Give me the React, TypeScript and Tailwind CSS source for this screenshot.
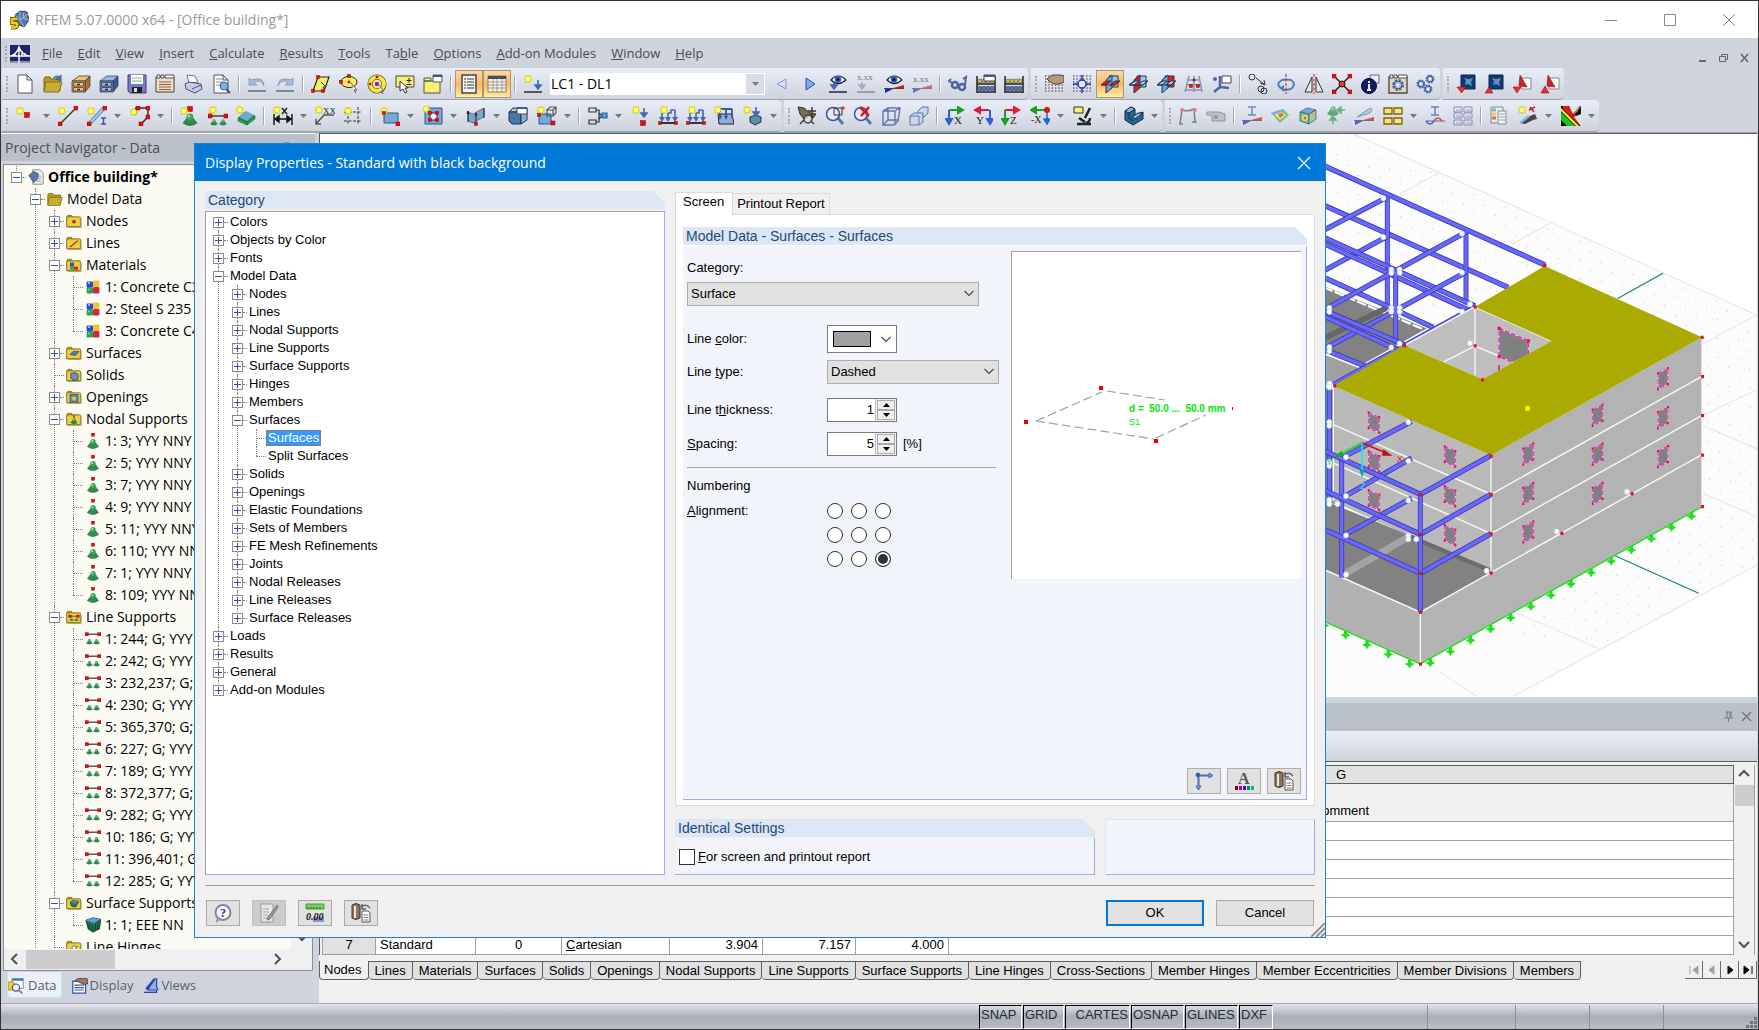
import React, { useState } from "react";
import type { ReactNode } from "react";
import clsx from "clsx";

// ---------- Icon primitives (20x20 grid) ----------

const Star = ({ x = 1, y = 1 }: { x?: number; y?: number }) => (
  <g transform={`translate(${x} ${y})`}>
    <path d="M4 0v8M0 4h8M1 1l6 6M7 1L1 7" stroke="#8a8420" strokeWidth="2" opacity=".5" />
    <path d="M4 0v8M0 4h8M1 1l6 6M7 1L1 7" stroke="#f4ee20" strokeWidth="1.300" />
    <circle cx="4" cy="4" r="2.200" fill="#ffff70" />
  </g>
);

const Dot = ({ x, y, s = 4 }: { x: number; y: number; s?: number }) => (
  <rect x={x - s / 2} y={y - s / 2} width={s} height={s} fill="#e01010" stroke="#a00000" strokeWidth=".5" />
);

const Cone = ({ x, y, s = 1 }: { x: number; y: number; s?: number }) => (
  <g transform={`translate(${x} ${y}) scale(${s})`}>
    <path d="M-3 1L-7 6Q0 11 7 6L3 1z" fill="#2f8a4c" stroke="#1c5c30" strokeWidth=".6" />
    <circle cy="0" r="3.400" fill="#3aa85c" />
    <circle cx="-1" cy="-1" r="1.200" fill="#a8e8b8" />
  </g>
);

const Down = ({ x, y, h = 8, c = "#4468b8" }: { x: number; y: number; h?: number; c?: string }) => (
  <path d={`M${x} ${y}v${h}M${x - 3} ${y + h - 3}l3 4l3-4z`} stroke={c} fill={c} strokeWidth="1.6" />
);

const Grid = () => (
  <path d="M1 2h18M1 5h18M1 8h18M1 11h18M1 14h18M1 17h18" stroke="#666" strokeWidth="1.4" strokeDasharray="1.4 1.9" />
);

const Cabinet = ({ a, b, c }: { a: string; b: string; c: string }) => (
  <g stroke="#333" strokeWidth=".7">
    <path d="M1 7l7-5h11l-5 5z" fill={b} />
    <path d="M14 7l5-5v10l-5 6z" fill={c} />
    <path d="M1 7h13v11H1z" fill={a} />
    <path d="M2.500 8.500h10v3.500h-10zM2.500 13.500h10v3.500h-10z" fill={b} />
    <path d="M6 10.500h3M6 15.500h3" strokeWidth="1.4" />
  </g>
);

const Cube = ({ a = "#8fa8d0", b = "#c8d8f0", c = "#4a6490" }: { a?: string; b?: string; c?: string }) => (
  <g stroke="#2c4468" strokeWidth=".8">
    <path d="M2 6l9 2v10l-9-3z" fill={a} />
    <path d="M2 6l7-4l9 2l-7 4z" fill={b} />
    <path d="M11 8l7-4v9l-7 5z" fill={c} />
  </g>
);

const Axis = ({ a, b, label }: { a: string; b: string; label: string }) => (
  <g>
    <path d={label === "Y" ? "M16 4H4M7 1L2 4l5 3z" : "M4 4h12M13 1l5 3l-5 3z"} stroke={a} fill={a} strokeWidth="2" />
    <path d={label === "Y" ? "M17 4v12M14 13l3 5l3-5z" : "M4 4v12M1 13l3 5l3-5z"} stroke={b} fill={b} strokeWidth="2" />
    <text x={label === "Y" ? 3 : 9} y="18" fontSize="11" fontFamily="Liberation Serif, serif" fill="#222">
      {label}
    </text>
  </g>
);

const Cross = ({ red }: { red: string }) => (
  <g stroke="#1c3850" strokeWidth="1">
    <path d="M9 2h9v11H9z" fill={red === "s" ? "#f01818" : "#98c8ec"} />
    <path d="M6 6l6-5v13l-6 5z" fill={red === "v" ? "#e02020" : "#6aa6d8"} />
    <path d="M1 11l5-4h5l-5 4zM10 11l5-4h5l-5 4z" fill={red === "h" ? "#e02020" : "#a8d0f0"} />
    <path d="M2 10l5-3M1 11h14l4-4" stroke={red === "h" ? "#a01010" : "#1c3850"} fill="none" />
  </g>
);

const Slope = () => (
  <g>
    <path d="M1 19v-4l10-1z" fill="#2020d0" />
    <path d="M20 11v4l-11-1z" fill="#e81010" />
    <path d="M0 14.500h20" stroke="#444" />
  </g>
);

const Abacus = () => (
  <g>
    <path d="M1 2v17M19 2v17M1 10h18M1 18h18" stroke="#222" strokeWidth="1.500" />
    {[4, 8, 12, 16].map((x) => (
      <g key={x}>
        <circle cx={x} cy="7" r="2" fill="#d8c050" stroke="#333" strokeWidth=".5" />
        <circle cx={x} cy="14.500" r="2.200" fill="#5878c8" stroke="#222" strokeWidth=".5" />
      </g>
    ))}
  </g>
);

const Gear = ({ x, y, r }: { x: number; y: number; r: number }) => (
  <g>
    <circle cx={x} cy={y} r={r} fill="none" stroke="#5070b0" strokeWidth={r} strokeDasharray={`${r * 0.5} ${r * 0.28}`} />
    <circle cx={x} cy={y} r={r} fill="#a8bce0" stroke="#35508c" />
    <circle cx={x} cy={y} r={r * 0.35} fill="#fff" />
  </g>
);

const Lens = () => (
  <g>
    <path d="M12 11l6 7" stroke="#5878b0" strokeWidth="3" />
    <circle cx="8" cy="8" r="6.500" fill="#e4ecf8" fillOpacity=".8" stroke="#3858a0" strokeWidth="1.500" />
  </g>
);

const Eye = ({ y = 7 }: { y?: number }) => (
  <g>
    <path d={`M3 ${y}Q10 ${y - 8} 18 ${y}Q10 ${y + 7} 3 ${y}z`} fill="#f4f8ff" stroke="#223" strokeWidth="1.200" />
    <circle cx="10" cy={y - 0.5} r="3.200" fill="#2860c0" />
    <circle cx="10" cy={y - 0.5} r="1.300" fill="#001" />
  </g>
);

const LoadArrows = () => (
  <g>
    <path d="M2 17h16" stroke="#334" strokeWidth="2" />
    <path d="M4 7v7M10 7v7M17 4v10M10 7h3V4h4" stroke="#4468b8" strokeWidth="1.600" fill="none" />
    <path d="M1 11l3 5l3-5zM7 11l3 5l3-5zM14 11l3 5l3-5z" fill="#4468b8" />
    <Star x={2} y={0} />
    <Dot x={2} y={17} s={3} />
    <Dot x={18} y={17} s={3} />
  </g>
);

const Doc = () => (
  <path d="M3 1h9l5 5v13H3zM12 1v5h5" fill="#fff" stroke="#555" />
);

const Pdf = ({ up }: { up?: boolean }) => (
  <g>
    <path d="M9 4h10v11H9z" fill="#fafafa" stroke="#888" />
    <path d="M8 1l7 12l-8-1z" fill="#d02028" stroke="#801018" strokeWidth=".6" />
    {up ? <path d="M1 19l4-7l4 7z" fill="#e83030" stroke="#901010" strokeWidth=".6" /> : <path d="M1 13h8l-4 6z" fill="#e83030" stroke="#901010" strokeWidth=".6" />}
  </g>
);

const Cad = ({ up }: { up?: boolean }) => (
  <g>
    <path d="M5 1h14v14H5z" fill="#0c3c70" stroke="#082848" />
    <path d="M8 4l4 1l5-1l-2 4l1 4l-4-2l-3 1l1-4z" fill="#70a8e0" opacity=".8" />
    {up ? <path d="M1 19l4-6l4 6z" fill="#e83030" stroke="#901010" strokeWidth=".6" /> : <path d="M1 13h9l-4.500 6z" fill="#e83030" stroke="#901010" strokeWidth=".6" />}
  </g>
);

const Folder = ({ open }: { open?: boolean }) => (
  <g>
    <path d="M1 5l1-2h5l1 2h9v12H1z" fill="#b89c20" stroke="#7a6410" />
    <path d={open ? "M3 8h16l-3 10H1z" : "M1 5h17v12H1z"} fill={open ? "#c8ae30" : "#ecd048"} stroke="#8a7418" />
    {!open && <path d="M2 18h17V7" stroke="#9a8a48" />}
  </g>
);

const icons: Record<string, ReactNode> = {
  new: <Doc />,
  open: (
    <g>
      <Folder open />
      <path d="M10 4q5-5 8 2M18 1v6l-5-2z" stroke="#3868a8" fill="#3868a8" fillOpacity=".7" />
    </g>
  ),
  block: <Cabinet a="#d8a058" b="#f0c080" c="#a87030" />,
  blockBlue: <Cabinet a="#6888d0" b="#98b4f0" c="#3858a0" />,
  save: (
    <g>
      <path d="M1 1h18v18H3l-2-2z" fill="#7878c8" stroke="#40407c" />
      <path d="M4 1h12v9H4z" fill="#fff" />
      <path d="M5 4h10M5 7h10" stroke="#78b878" />
      <path d="M5 13h10v6H5z" fill="#222" />
      <path d="M7 14h3v4H7z" fill="#ddd" />
    </g>
  ),
  report: (
    <g>
      <path d="M1 3h18v15H1z" fill="#f0dcc0" stroke="#444" />
      <path d="M2 1h3v3H2zM6 1h3v3H6zM10 1h9v3h-9z" fill="#fff" stroke="#555" />
      <path d="M4 8h12M4 10.500h12M4 13h12M4 15.500h12" stroke="#806850" />
    </g>
  ),
  print: (
    <g>
      <path d="M4 1l8 1l3 6l-9 1z" fill="#fff" stroke="#777" />
      <path d="M2 10l4-2l12 2l1 5l-7 4l-9-4z" fill="#c8c8e8" stroke="#50507c" />
      <path d="M9 15l9-4" stroke="#50507c" />
    </g>
  ),
  preview: (
    <g>
      <Doc />
      <path d="M5 5h6M5 8h7M5 11h5" stroke="#888" />
      <path d="M15 15l4 4" stroke="#446" strokeWidth="2" />
      <circle cx="13" cy="12" r="4" fill="#80b0e8" stroke="#3868a0" />
    </g>
  ),
  undo: <g><path d="M2 4v7h8L7 8q7-3 10 4q0-10-13-6z" fill="#a8bcd8" stroke="#7890b0" strokeWidth=".7" /><path d="M1 17h18" stroke="#808890" strokeWidth="2" /></g>,
  redo: <g><path d="M18 4v7h-8l3-3q-7-3-10 4q0-10 13-6z" fill="#a8bcd8" stroke="#7890b0" strokeWidth=".7" /><path d="M1 17h18" stroke="#808890" strokeWidth="2" /></g>,
  selPoly: <g><path d="M7 3h11l-5 14H2z" fill="#f8f060" stroke="#222" strokeWidth="1.200" /><Dot x={7} y={3} s={3} /><Dot x={2} y={17} s={3} /><Dot x={12} y={17} s={3} /><path d="M10 8l5 5h-3l2 4" fill="#fff" stroke="#333" /></g>,
  selEllipse: <g><ellipse cx="10" cy="8" rx="8" ry="5.500" fill="#f8f060" stroke="#222" /><Dot x={10} y={2} s={3} /><Dot x={2} y={8} s={3} /><Dot x={10} y={8} s={2} /><path d="M12 9l6 7h-3l2 3" fill="#fff" stroke="#555" /></g>,
  selRing: <g><circle cx="10" cy="10" r="7" fill="none" stroke="#333" strokeWidth="5" /><circle cx="10" cy="10" r="7" fill="none" stroke="#f8e830" strokeWidth="4" /><Dot x={10} y={10} s={3} /><Dot x={10} y={3} s={2} /><Dot x={3} y={10} s={2} /><path d="M11 10l6 7h-3l2 3" fill="#fff" stroke="#555" /></g>,
  selSign: <g><path d="M1 2h18v11H1z" fill="#f8f070" stroke="#444" /><path d="M14 4v5M11.500 6.500h5M11.500 10.500h5" stroke="#222" /><path d="M5 7v10l3-2l2 4l2-1l-2-4h3z" fill="#fff" stroke="#333" /></g>,
  selBox: <g><path d="M1 7h16v12H1zM1 4h7v3H1z" fill="#f8f070" stroke="#555" /><path d="M10 1h9v7h-9z" fill="#fff" stroke="#555" /><path d="M10 2h9" stroke="#33589a" strokeWidth="2" /></g>,
  navToggle: <g><path d="M3 1h14v18H3z" fill="#f4f4f4" stroke="#444" strokeWidth="1.500" /><path d="M5 5h2M5 8h2M5 11h2M5 14h2M8 5h7M8 8h7M8 11h7M8 14h7" stroke="#333" strokeWidth="1.200" /></g>,
  tblToggle: <g><path d="M1 2h18v16H1z" fill="#f4f4ee" stroke="#8a7a60" /><path d="M1 2h18v3H1z" fill="#445068" /><path d="M1 8h18M1 11h18M1 14h18M6 5v13M10 5v13M15 5v13" stroke="#a89c88" /></g>,
  loadCase: <g><path d="M1 18h18" stroke="#555" strokeWidth="2" /><Down x={15} y={6} /><Star x={1} y={1} /></g>,
  prev: <path d="M14 5v10L5 10z" fill="#d4e0f4" stroke="#8098c8" />,
  next: <path d="M6 4v12l9-6z" fill="#80a8f0" stroke="#2850b0" />,
  eyeLoad: <g><path d="M1 18h18" stroke="#555" strokeWidth="2" /><Eye y={6} /><Down x={6} y={9} h={5} /></g>,
  xxLoad: <g opacity=".7"><path d="M1 18h18" stroke="#888" strokeWidth="2" /><Down x={6} y={8} h={6} c="#8898c0" /><text x="1" y="6" fontSize="9" fontFamily="Liberation Serif, serif" fill="#444">x.xx</text></g>,
  eyeRes: <g><Slope /><Eye y={6} /></g>,
  xxRes: <g opacity=".6"><Slope /><text x="1" y="8" fontSize="9" fontFamily="Liberation Serif, serif" fill="#222">x.xx</text></g>,
  glasses: <g fill="none" stroke="#48689c" strokeWidth="2.500"><circle cx="7" cy="11" r="3" /><circle cx="14" cy="13" r="3" /><path d="M4 9L1 7l2-2M17 11l1-8l-3 2" strokeWidth="2" /></g>,
  calcDlg: <g><Abacus /><path d="M8 1h11v6H8z" fill="#fff" stroke="#445" /><path d="M8 2h11" stroke="#3858a0" strokeWidth="2" /></g>,
  calc: <Abacus />,
  gridHand: <g><Grid /><path d="M3 5l5-4h8l4 1v6l-5 2q-7 1-12-5z" fill="#b89878" stroke="#5a4430" /></g>,
  snap: <g><Grid /><path d="M10 1v18M1 10h18" stroke="#2838c0" strokeWidth="1.500" /><circle cx="10" cy="10" r="4" fill="#e8ecf8" stroke="#2838c0" strokeWidth="1.500" /></g>,
  planeXY: <Cross red="h" />,
  planeYZ: <Cross red="v" />,
  planeXZ: <Cross red="s" />,
  curveGrid: <g><path d="M5 2L1 18M10 2v16M15 2l3 16M4 6h12M3 11h14M1 16h17" stroke="#8098ac" strokeWidth="1.500" fill="none" /><Dot x={10} y={6} s={2} /><Dot x={7} y={12} s={3} /><Dot x={14} y={12} s={3} /></g>,
  cs: <g><path d="M8 2v11M8 13l9 1M8 13l-6 5" stroke="#4868a8" strokeWidth="2.500" /><path d="M10 2h9v7h-9z" fill="#fff" stroke="#445" /><circle cx="3" cy="5" r="2" fill="#4868a8" /></g>,
  copy: <g fill="none" stroke="#333"><circle cx="4" cy="3" r="3" /><circle cx="13" cy="15" r="3" /><circle cx="16" cy="17" r="3" /><path d="M8 4l8 6M12 9l5 2l-1-5" /></g>,
  rotate: <g fill="none"><path d="M5 14q-6-4 1-8q4-1 9 0q6 4 0 9M8 16q3 0 7-1" stroke="#5080c0" strokeWidth="2" /><path d="M8 11v7l-5-4z" fill="#5080c0" /><path d="M10 0v20" stroke="#e01010" strokeDasharray="3 1.500" /></g>,
  mirror: <g><path d="M8 3v15H1zM12 3v15h7z" fill="#e8e8e8" stroke="#333" /><path d="M10 0v20" stroke="#e01010" strokeDasharray="3 1.500" /></g>,
  connect: <g><path d="M2 2l16 16M18 2L2 18" stroke="#222" strokeWidth="1.500" /><circle cx="10" cy="10" r="3" fill="#e04040" stroke="#400" /><Dot x={2} y={2} /><Dot x={18} y={2} /><Dot x={2} y={18} /><Dot x={18} y={18} /></g>,
  info: <g><path d="M10 1h9v8h-9z" fill="#e8ecf4" stroke="#668" /><circle cx="9" cy="12" r="7.500" fill="#141c68" stroke="#000840" /><path d="M9 7v2M8 11h1v5M7 16h4" stroke="#fff" strokeWidth="1.800" fill="none" /></g>,
  config: <g><path d="M1 3h18v16H1z" fill="#e8d4b8" stroke="#444" strokeWidth="1.300" /><path d="M2 1h3v3H2zM6 1h3v3H6zM10 1h9v3h-9z" fill="#fff" stroke="#555" /><Gear x={10} y={11} r={4} /></g>,
  gears: <g><Gear x={5} y={10} r={3} /><Gear x={14} y={5} r={3} /><Gear x={12} y={15} r={3} /></g>,
  cadIn: <Cad />,
  cadOut: <Cad up />,
  pdfIn: <Pdf />,
  pdfOut: <Pdf up />,
  node: <g><Star x={0} y={1} /><Dot x={11} y={9} s={5} /></g>,
  line: <g><path d="M2 18L18 2" stroke="#333" strokeWidth="1.500" /><Star x={0} y={1} /><Dot x={2} y={18} /><Dot x={18} y={2} /></g>,
  member: <g><path d="M3 17L17 2" stroke="#5880b0" strokeWidth="4" /><path d="M3 17L17 2" stroke="#a8c8e8" strokeWidth="2" /><Star x={0} y={1} /><Dot x={2} y={18} /><Dot x={18} y={2} /><path d="M14 12h5M14 18h5M16.500 12v6" stroke="#33589a" strokeWidth="1.400" /></g>,
  polyline: <g><path d="M6 9V2h12v9l-7 7" stroke="#333" strokeWidth="1.500" fill="none" /><Star x={0} y={2} /><Dot x={8} y={2} /><Dot x={18} y={2} /><Dot x={18} y={11} /><Dot x={11} y={18} /></g>,
  nodalSup: <g><Cone x={10} y={11} s={1} /><Dot x={10} y={3} s={5} /><Star x={0} y={1} /></g>,
  lineSup: <g><path d="M2 10h17" stroke="#333" strokeWidth="1.400" /><Cone x={6} y={15} s={0.5} /><Cone x={15} y={15} s={0.5} /><Star x={1} y={0} /><Dot x={2} y={10} /><Dot x={18} y={10} /></g>,
  surfSup: <g><path d="M2 12l7-6l10 4l-8 6zM2 12v3l9 4v-3zM11 16v3l8-6v-3z" fill="#2fa050" stroke="#186830" strokeWidth=".6" /><path d="M3 11l7-6l8 4l-7 6z" fill="#70a8d8" /><Star x={0} y={0} /></g>,
  dim: <g><path d="M1 8v11M19 8v11M2 13h16M2 13l4-3v6zM18 13l-4-3v6z" stroke="#111" fill="#111" strokeWidth="1.400" /><Star x={0} y={0} /><path d="M9 2l5 6M14 2L9 8" stroke="#222" strokeWidth="1.500" /></g>,
  note: <g><path d="M19 9H9l-8 9M1 13v5h5" stroke="#555" fill="none" strokeWidth="1.500" /><Star x={0} y={0} /><text x="8" y="8" fontSize="9" fontFamily="Liberation Serif, serif" fill="#222">XX</text></g>,
  guide: <g><path d="M1 6h18M1 15h18M5 1v18M15 1v18" stroke="#333" strokeDasharray="3 1.500" /><Star x={1} y={1} /></g>,
  surface: <g><path d="M4 7h14v10H4z" fill="#78a8d8" stroke="#2c5888" /><Star x={0} y={1} /><Dot x={4} y={7} s={3} /><Dot x={18} y={18} /></g>,
  opening: <g><path d="M2 2h17v16H2z" fill="#78a8d8" stroke="#2c5888" /><path d="M7 7h7v7H7z" fill="#e8edf6" stroke="#333" /><Star x={-1} y={-1} /><Dot x={7} y={7} s={3} /><Dot x={14} y={7} s={3} /><Dot x={7} y={14} s={3} /><Dot x={14} y={14} s={3} /></g>,
  quad: <g><path d="M2 6l5 2l5-3l6-3v9l-6 3l-5 3l-5-2z" fill="#78a8c8" stroke="#446" strokeWidth=".6" /><path d="M2 5v11M10 7v12M18 2v10M1 8l1-3l1 3M9 10l1-3l1 3" stroke="#222" fill="none" /><Dot x={10} y={18} s={3} /></g>,
  solid: <g><path d="M1 6l4-4h14l-3 4z" fill="#a8c4e4" stroke="#1c3450" /><path d="M1 6h12v12H4l-3-3z" fill="#4878a8" stroke="#1c3450" /><path d="M13 6l6-4v12l-6 4z" fill="#88b0d8" stroke="#1c3450" /><path d="M9 2h10v6H9z" fill="#fff" stroke="#445" /><path d="M9 2h10" stroke="#3858a0" strokeWidth="2" /></g>,
  solidSet: <g><path d="M2 8h12v10H2z" fill="#78a8d8" stroke="#2c5888" /><path d="M10 4h6v6h-6zM10 4l3-3h6v6l-3 3M16 4l3-3" fill="none" stroke="#555" strokeWidth="1.200" /><Star x={0} y={0} /><Dot x={2} y={9} s={3} /><Dot x={16} y={17} /></g>,
  tree: <g fill="none" stroke="#333" strokeWidth="1.200"><path d="M1 2h7v4H1zM1 14h7v4H1zM8 4h3v12H8M11 7l3 3l-3 3" /><path d="M14 7h5v5h-5z" fill="#5898d8" stroke="#2860a0" /></g>,
  loadNode: <g><Down x={14} y={2} h={8} /><Star x={2} y={0} /><Dot x={13} y={17} s={5} /></g>,
  loadMember: <LoadArrows />,
  loadLine: <LoadArrows />,
  loadSurf: <g><path d="M4 8h14l2 10H5z" fill="#8fb0d8" stroke="#223" /><path d="M6 3h12M6 3v9M12 3v9M18 3v9" stroke="#3858a0" strokeWidth="1.800" /><path d="M4 10l2 4l2-4zM10 10l2 4l2-4z" fill="#3858a0" /><Star x={0} y={0} /></g>,
  loadSolid: <g><path d="M7 11l6-2l5 2v5l-6 3l-5-3z" fill="#5890a8" stroke="#234" /><Down x={13} y={1} h={8} /><Star x={0} y={0} /></g>,
  handView: <g><path d="M1 1l6 1l6 5l6 1l-3 4l-3-3l-6 4l-4-5z" fill="#7a6858" stroke="#332" /><path d="M15 1v12M11 5h8M3 18l4-4M17 18l-4-4" stroke="#333" strokeWidth="1.400" /><circle cx="11" cy="13" r="4" fill="#ddd" fillOpacity=".6" stroke="#443" strokeWidth="1.400" /></g>,
  zoomWin: <g><Lens /><path d="M9 2h8v7H9z" fill="none" stroke="#333" /><path d="M18 0v4M16 2h4" stroke="#e01010" /></g>,
  zoomAll: <g><Lens /><path d="M7 1l9 9M16 1L8 10" stroke="#d81818" strokeWidth="2.500" /></g>,
  cubeWire: <g fill="none" stroke="#6078a8" strokeWidth="1.400"><path d="M2 5l5-3h12l-2 13l-4 4H2zM2 5h12v14M14 5l5-3M7 2v12h10M7 14l-5 5" /></g>,
  cubeExpl: <g fill="#c8d4ec" stroke="#6078a8"><path d="M9 5l4-4h6v6l-4 4H9z" /><path d="M1 10h9v9H1zM1 10l4-3h9v9l-4 3" /></g>,
  axX: <Axis a="#18a028" b="#3060d0" label="X" />,
  axY: <Axis a="#d82038" b="#3060d0" label="Y" />,
  axZ: <Axis a="#d82038" b="#18a028" label="Z" />,
  axNX: <g><path d="M16 4H5M6 1L1 4l5 3z" stroke="#18a028" fill="#18a028" strokeWidth="2" /><path d="M17 4v12M14 13l3 5l3-5z" stroke="#3060d0" fill="#3060d0" strokeWidth="1.500" /><circle cx="17" cy="4" r="3" fill="#d01818" /><text x="1" y="17" fontSize="10" fontFamily="Liberation Serif, serif" fill="#222">-X</text></g>,
  viewer: <g><path d="M1 1h9v6H1z" fill="#f8f070" stroke="#333" /><path d="M17 2l-5 10M6 12l6 4M4 18h14M17 12q0 4-4 5" stroke="#222" strokeWidth="2.500" fill="none" /></g>,
  render: <g stroke="#112840"><path d="M1 5l6-4l4 2v6l8-3v7l-10 6l-8-5z" fill="#2c6490" /><path d="M1 5l6-4l4 2l-6 4zM8 11l6-4l5 0l-8 6z" fill="#88bce4" /><path d="M5 7v5l4 3" fill="none" /></g>,
  frame: <g opacity=".7"><path d="M2 18L4 4Q10 6 16 3l1 13" fill="none" stroke="#555" strokeWidth="1.500" /><circle cx="4" cy="4" r="2" fill="#e06060" /><circle cx="17" cy="4" r="2" fill="#e06060" /><path d="M1 18h4M14 16h5" stroke="#30a050" strokeWidth="2" /></g>,
  camera: <g opacity=".6"><path d="M1 6h12l6 2v7H6V9H1z" fill="#aaa" stroke="#666" /><circle cx="10" cy="11" r="2" fill="#666" /></g>,
  beamRes: <g opacity=".7"><Slope /><path d="M6 1h8M10 1v8M6 9h8" stroke="#4868a8" strokeWidth="1.600" /></g>,
  surfRes: <g opacity=".8"><path d="M1 7l12-4l6 6l-9 8z" fill="#58c060" /><path d="M4 8l8-2l4 3l-6 5z" fill="#f0e050" /><path d="M8 8l4-1l2 2l-4 3z" fill="#e05040" /><path d="M1 7l12-4l2 2L3 9z" fill="#60a0e8" /></g>,
  solidRes: <g opacity=".85"><Cube a="#58c870" b="#60a0e8" c="#88d0a0" /><circle cx="7" cy="12" r="3" fill="#f0e050" /><circle cx="7" cy="12" r="1.500" fill="#e04040" /><circle cx="15" cy="9" r="2" fill="#e8a040" /></g>,
  reaction: <g opacity=".7"><Cone x={7} y={3} s={0.8} /><path d="M19 4h-6M15 1l-4 3l4 3zM7 18v-6M4 14l3-4l3 4z" stroke="#38a050" fill="#38a050" strokeWidth="1.500" /></g>,
  slice: <g opacity=".7"><Slope /><path d="M3 11L16 2q4 1 0 5z" fill="#a8bcd8" stroke="#5878a0" /></g>,
  panels: <g fill="#f8e478" stroke="#7a6410" strokeWidth="1.300"><path d="M1 2h8v6H1zM11 2h8v6h-8zM1 12h8v6H1zM11 12h8v6h-8z" /></g>,
  distrib: <g opacity=".8" fill="none"><path d="M6 1h8M10 1v8M6 9h8" stroke="#4868a8" strokeWidth="1.500" /><path d="M1 15h19" stroke="#555" /><path d="M1 15q4 6 8 0" stroke="#2040d0" strokeWidth="1.500" /><path d="M9 15q4-6 8 0" stroke="#e02020" strokeWidth="1.500" /></g>,
  sections: <g opacity=".7" fill="#e4ecf8" stroke="#5870a8"><path d="M1 1h8v5H1zM11 1h8v5h-8zM1 7h8v5H1zM11 7h8v5h-8zM1 14h8v5H1zM11 14h8v5h-8z" /><path d="M3 4h5M13 4h5M3 10h5M13 10h5M3 17h5M13 17h5" stroke="#d06070" /></g>,
  legend: <g opacity=".7"><path d="M2 1h12v16H2z" fill="#eee" stroke="#666" /><path d="M3 4h4" stroke="#40c060" strokeWidth="3" /><path d="M3 8h4" stroke="#e0c040" strokeWidth="3" /><path d="M3 12h4" stroke="#d04040" strokeWidth="3" /><path d="M9 5h8v13H9z" fill="#fff" stroke="#666" /><path d="M10 8h6M10 11h6M10 14h6" stroke="#888" /></g>,
  cut: <g><path d="M2 17l10-7l5-2l2 5l-4 1l-8 4z" fill="#444" /><path d="M2 17l9-7" stroke="#8ab0e0" strokeWidth="2.500" /><path d="M11 4l6-3M12 1l4 5" stroke="#d02020" strokeWidth="1.600" /><Star x={0} y={0} /></g>,
  colors: <g><path d="M0 0h20v20H0z" fill="#111" /><path d="M0 6l14 14H6L0 14z" fill="#20c020" /><path d="M0 5l15 15h3L0 2z" fill="#f8f020" /><path d="M2 0h5l13 15v5h-1L2 3z" fill="#e01818" /><path d="M8 0h12L12 8z" fill="#dfe3ec" /><path d="M19 0l-8 10l5-4l4-6z" fill="#f0c030" stroke="#333" strokeWidth=".6" /><path d="M20 8v12l-7-9z" fill="#dfe3ec" /></g>,
  help: <g><path d="M5 14l-2 5l5-3z" fill="#ddd" stroke="#888" /><circle cx="10" cy="9.500" r="7.500" fill="#f4f4f8" stroke="#808890" strokeWidth="2" /><text x="7" y="14" fontSize="12" fontWeight="bold" fontFamily="Liberation Serif, serif" fill="#2038a0">?</text></g>,
  edit: <g><path d="M2 1h12v18H2z" fill="#e8e8e0" stroke="#999" /><path d="M4 6h6M4 9h6M4 12h5M4 15h5" stroke="#a8a8a0" /><path d="M18 2L9 14l-1 3l3-1l8-12z" fill="#999" stroke="#777" /></g>,
  units: <g><path d="M1 1h18v5H1z" fill="#78d060" stroke="#48a038" /><path d="M3 6V4M6 6V4M9 6V4M12 6V4M15 6V4" stroke="#286018" /><path d="M8 14h11v5H8z" fill="#8898c0" /><text x="1" y="17" fontSize="10" fontWeight="bold" fontStyle="italic" fontFamily="Liberation Serif, serif" fill="#112">0.00</text></g>,
  defaults: <g><path d="M1 2q4-3 8 0v13q-4 3-8 0z" fill="#8a7460" stroke="#443628" /><path d="M4 3v12" stroke="#f0e4d8" strokeWidth="2" /><path d="M10 4q5-4 9 1M11 1v5h4" stroke="#666" strokeWidth="1.500" fill="none" /><path d="M11 8h6l2 2v9h-8z" fill="#fff" stroke="#555" /><path d="M12.500 12h5M12.500 14.500h5M12.500 17h5" stroke="#777" /></g>,
  axes: <g fill="#7898d8" stroke="#4868b0"><path d="M5 4h10v-2l4 2.500l-4 2.500v-2H5z" /><path d="M4 5v10H2l2.500 4L7 15H5V5z" /><circle cx="4" cy="4" r="2" fill="#2850c0" /></g>,
  font: <g><path d="M1 15h3v4H1z" fill="#900010" /><path d="M5 15h3v4H5z" fill="#a000a0" /><path d="M9 15h3v4H9z" fill="#4010e0" /><path d="M13 15h3v4h-3z" fill="#008080" /><path d="M17 15h3v4h-3z" fill="#10c040" /><text x="4" y="13" fontSize="16" fontWeight="bold" fontFamily="Liberation Serif, serif" fill="#555">A</text></g>,
  app: <g><path d="M6 5l5-4l7 1l2 8l-5 7l-7-3z" fill="#5878a8" stroke="#283850" /><path d="M11 1v9l8-6M11 10l4 7M11 10L6 5M15 2l-1 6l6 2" stroke="#a0bcdc" fill="none" /><path d="M8 9H3v4h3q3 0 2 3q-1 2-6 1.500" fill="none" stroke="#604c00" strokeWidth="4" /><path d="M8 9H3v4h3q3 0 2 3q-1 2-6 1.500" fill="none" stroke="#f4cc10" strokeWidth="2.500" /></g>,
  bridge: <g><path d="M0 1h20v18H0z" fill="#1c2470" /><path d="M0 12h20M9 3v16M1 12q6-2 8-9q3 8 10 9M5 12V9M12 12V7M15 12v-3" stroke="#fff" strokeWidth="1.400" fill="none" /><path d="M0 18h20" stroke="#fff" /></g>,
  // navigator
  folderOpen: <Folder open />,
  project: <g><path d="M6 1h9l4 4v14H6z" fill="#eee" stroke="#777" /><path d="M10 9h6M10 12h6M10 15h6" stroke="#888" /><path d="M1 8l6-5l6 3l-1 6l-5 5z" fill="#5878a8" stroke="#38507c" /></g>,
  folderNode: <g><Folder /><Dot x={10} y={11} s={3} /></g>,
  folderLine: <g><Folder /><path d="M5 15L15 7" stroke="#c02020" strokeWidth="1.500" /></g>,
  folderMat: <g><Folder /><path d="M5 7h5v5H5z" fill="#3050d0" /><path d="M10 7h5v5h-5z" fill="#f0d020" /><path d="M5 12h5v4H5z" fill="#30b040" /><path d="M10 12h5v4h-5z" fill="#e02030" /></g>,
  folderSurf: <g><Folder /><path d="M5 12l4-4h7l-4 5z" fill="#4880c0" stroke="#284878" /></g>,
  folderSolid: <g><Folder /><path d="M6 8l5-1l4 2v6l-5 2l-4-3z" fill="#7090b8" stroke="#284060" /></g>,
  folderOpening: <g><Folder /><path d="M5 7h10v9H5z" fill="#6090c0" stroke="#284878" /><path d="M8 10h4v4H8z" fill="#e8cc48" /></g>,
  folderNSup: <g><Folder /><Cone x={10} y={11} s={0.6} /><Dot x={10} y={7} s={2} /></g>,
  folderLSup: <g><Folder /><path d="M5 9h10" stroke="#333" /><Dot x={5} y={9} s={3} /><Dot x={15} y={9} s={3} /><Cone x={7} y={12} s={0.35} /><Cone x={13} y={12} s={0.35} /></g>,
  folderSSup: <g><Folder /><path d="M5 9l4-2l7 1l-4 7l-5-1z" fill="#208050" stroke="#104030" /><path d="M5 9l4-2l7 1l-4 3z" fill="#4888c0" /></g>,
  folderHinge: <g><Folder /><path d="M4 14L15 9" stroke="#555" /><circle cx="10" cy="11" r="2.500" fill="#fff" stroke="#555" /></g>,
  material: <g><rect x="2" y="3" width="8" height="8" rx="1.500" fill="#2848d8" /><rect x="10" y="2" width="8" height="8" rx="1.500" fill="#e8c828" /><rect x="2" y="11" width="8" height="7" rx="1.500" fill="#20a840" /><rect x="10" y="10" width="8" height="8" rx="1.500" fill="#d82048" /><circle cx="5" cy="5" r="1.200" fill="#fff" opacity=".8" /><circle cx="5" cy="13" r="1.200" fill="#fff" opacity=".5" /></g>,
  nSup: <g><Cone x={10} y={11} s={1} /><Dot x={10} y={2} s={4} /></g>,
  lSup: <g><path d="M1 4h18" stroke="#333" strokeWidth="1.500" /><Cone x={5.5} y={12} s={0.55} /><Cone x={14.5} y={12} s={0.55} /><Dot x={2} y={4} s={4} /><Dot x={18} y={4} s={4} /></g>,
  sSup: <g><path d="M1 4l9-3l10 2l-2 12l-8 4l-6-4z" fill="#207048" stroke="#103828" /><path d="M1 4l9-3l10 2l-8 5z" fill="#58a0d8" /><path d="M12 8l8-5M5 9v6M9 10v7M13 9v8M16 8v7" stroke="#0c3020" /></g>,
  tabData: <g><path d="M5 1h14v12H5z" fill="#fff" stroke="#4878c0" /><path d="M5 2h14" stroke="#4878c0" strokeWidth="3" /><path d="M0 5h7l1 2v8H0z" fill="#f0cc30" stroke="#a08010" /><circle cx="10" cy="12" r="4.500" fill="#e8f0fc" stroke="#556" strokeWidth="1.500" /><path d="M13 15l5 4" stroke="#a08050" strokeWidth="2.500" /></g>,
  tabDisplay: <g><path d="M1 4h16v15H1z" fill="#fff" stroke="#3050a0" strokeWidth="1.500" /><path d="M3 9h12M3 12h12M3 15h12" stroke="#3858a8" strokeWidth="1.500" /><path d="M4 3l5-3h9l2 2v5l-5 1z" fill="#9a7860" stroke="#443020" /></g>,
  tabViews: <g><path d="M1 18h16v-3H6L14 1h3v10l2 4" fill="#90b0e8" stroke="#2848a8" strokeWidth="1.500" /><path d="M4 14L14 2" stroke="#2848a8" strokeWidth="3" /></g>,
};

function Icon({ name, className = "size-5" }: { name: string; className?: string }) {
  return (
    <svg viewBox="0 0 20 20" className={clsx("shrink-0", className)} fill="none" aria-hidden="true">
      {icons[name]}
    </svg>
  );
}

// ---------- Toolbars ----------

// "|" is a separator, a trailing "v" after ":" adds a drop-down, ":on" is pressed
const rowOne = [
  ["new", "open", "block", "blockBlue", "save", "report", "print", "preview", "|", "undo", "redo", "|", "selPoly", "selEllipse", "selRing", "selSign", "selBox", "|", "navToggle:on", "tblToggle:on", "|", "loadCase", "combo", "prev", "next", "eyeLoad", "xxLoad", "eyeRes", "xxRes", "|", "glasses", "calcDlg", "calc"],
  ["gridHand", "snap", "planeXY:on", "planeYZ", "planeXZ", "curveGrid", "cs", "|", "copy", "rotate", "mirror", "connect", "info", "config", "gears"],
  ["cadIn", "cadOut", "pdfIn", "pdfOut"],
];

const rowTwo = [
  ["node:v", "line", "member:v", "polyline:v", "|", "nodalSup", "lineSup", "surfSup", "|", "dim:v", "note", "guide", "|", "surface:v", "opening:v", "quad:v", "solid", "solidSet:v", "|", "tree:v", "loadNode", "loadMember", "loadLine", "loadSurf", "loadSolid:v"],
  ["handView", "zoomWin", "zoomAll", "cubeWire", "cubeExpl", "|", "axX", "axY", "axZ", "axNX:v", "viewer:v", "|", "render:v"],
  ["frame", "camera", "|", "beamRes", "surfRes", "solidRes", "reaction", "slice", "panels:v", "distrib", "sections", "|", "legend", "cut:v", "colors:v"],
];

function Grip() {
  return (
    <span className="flex w-[9px] shrink-0 items-center justify-center">
      <span className="h-4 border-l-2 border-dotted border-[#a4a9b5]" />
    </span>
  );
}

function ToolItem({ spec }: { spec: string }) {
  const [name, mode] = spec.split(":");
  if (name === "|") {
    return (
      <span className="flex w-2 shrink-0 items-center justify-center">
        <span className="h-[18px] w-0.5 border-r border-l border-r-white border-l-[#a4a9b5]" />
      </span>
    );
  }
  if (name === "combo") {
    return (
      <span className="relative mx-[3px] flex h-[22px] w-[215px] shrink-0 self-center">
        <select
          aria-label="Load case"
          className="w-full appearance-none border border-white bg-white font-['Open_Sans',sans-serif] text-sm leading-5 text-black"
        >
          <option>LC1 - DL1</option>
        </select>
        <span className="pointer-events-none absolute inset-y-px right-px flex w-[18px] items-center justify-center bg-[#d8dce5]">
          <Caret />
        </span>
      </span>
    );
  }
  const button = (
    <button
      type="button"
      aria-label={name}
      className={clsx(
        "flex h-7 w-7 shrink-0 items-center justify-center",
        mode === "on" && "border border-[#a89878] bg-linear-to-b from-[#fbd8a8] via-[#fdb864] to-[#ffec9c]",
      )}
    >
      <Icon name={name} />
    </button>
  );
  if (mode !== "v") return button;
  return (
    <span className="flex shrink-0 items-center pr-0.5 pl-px">
      {button}
      <button type="button" aria-label={`${name} options`} className="flex h-7 w-3 items-center justify-center">
        <Caret />
      </button>
    </span>
  );
}

function Caret() {
  return (
    <svg viewBox="0 0 7 4" className="h-1 w-[7px]" aria-hidden="true">
      <path d="M0 0h7L3.500 4z" fill="#76787e" />
    </svg>
  );
}

function ToolbarRow({ groups }: { groups: string[][] }) {
  return (
    <div className="flex h-8 shrink-0 gap-[3px] pl-px">
      {groups.map((group, i) => (
        <div
          key={i}
          className="flex h-8 shrink-0 items-center rounded-tr-sm rounded-br-sm border-b border-[#9ea2ac] bg-linear-to-b from-[#e9edf7] to-[#cfd3dd]"
        >
          <Grip />
          {group.map((spec, j) => (
            <ToolItem key={j} spec={spec} />
          ))}
        </div>
      ))}
    </div>
  );
}

// ---------- Trees ----------

type TreeNode = {
  label: string;
  icon?: string;
  state?: "plus" | "minus";
  bold?: boolean;
  more?: boolean; // siblings continue below the visible part
  children?: TreeNode[];
};

const leaves = (icon: string, labels: string[]): TreeNode[] => labels.map((label) => ({ label, icon }));

const navigatorTree: TreeNode[] = [
  {
    label: "Office building*",
    icon: "project",
    state: "minus",
    bold: true,
    children: [
      {
        label: "Model Data",
        icon: "folderOpen",
        state: "minus",
        more: true,
        children: [
          { label: "Nodes", icon: "folderNode", state: "plus" },
          { label: "Lines", icon: "folderLine", state: "plus" },
          { label: "Materials", icon: "folderMat", state: "minus", children: leaves("material", ["1: Concrete C30/37", "2: Steel S 235", "3: Concrete C40/50"]) },
          { label: "Surfaces", icon: "folderSurf", state: "plus" },
          { label: "Solids", icon: "folderSolid" },
          { label: "Openings", icon: "folderOpening", state: "plus" },
          {
            label: "Nodal Supports",
            icon: "folderNSup",
            state: "minus",
            children: leaves("nSup", ["1: 3; YYY NNY", "2: 5; YYY NNY", "3: 7; YYY NNY", "4: 9; YYY NNY", "5: 11; YYY NNY", "6: 110; YYY NNY", "7: 1; YYY NNY", "8: 109; YYY NNY"]),
          },
          {
            label: "Line Supports",
            icon: "folderLSup",
            state: "minus",
            children: leaves("lSup", ["1: 244; G; YYY", "2: 242; G; YYY", "3: 232,237; G; YYY", "4: 230; G; YYY", "5: 365,370; G; YYY", "6: 227; G; YYY", "7: 189; G; YYY", "8: 372,377; G; YYY", "9: 282; G; YYY", "10: 186; G; YYY", "11: 396,401; G; YYY", "12: 285; G; YYY"]),
          },
          { label: "Surface Supports", icon: "folderSSup", state: "minus", children: leaves("sSup", ["1: 1; EEE NN"]) },
          { label: "Line Hinges", icon: "folderHinge", more: true },
        ],
      },
    ],
  },
];

const plus = (labels: string[]): TreeNode[] => labels.map((label) => ({ label, state: "plus" }));

const categoryTree: TreeNode[] = [
  ...plus(["Colors", "Objects by Color", "Fonts"]),
  {
    label: "Model Data",
    state: "minus",
    children: [
      ...plus(["Nodes", "Lines", "Nodal Supports", "Line Supports", "Surface Supports", "Hinges", "Members"]),
      { label: "Surfaces", state: "minus", children: [{ label: "Surfaces" }, { label: "Split Surfaces" }] },
      ...plus(["Solids", "Openings", "Elastic Foundations", "Sets of Members", "FE Mesh Refinements", "Joints", "Nodal Releases", "Line Releases", "Surface Releases"]),
    ],
  },
  ...plus(["Loads", "Results", "General", "Add-on Modules"]),
];

function Expander({ state }: { state: "plus" | "minus" }) {
  return (
    <button
      type="button"
      aria-label={state === "plus" ? "Expand" : "Collapse"}
      className="relative flex size-[11px] shrink-0 items-center justify-center border border-[#8c8c8c] bg-white"
    >
      <svg viewBox="0 0 7 7" className="size-[7px]" aria-hidden="true">
        <path d={state === "plus" ? "M0 3.500h7M3.500 0v7" : "M0 3.500h7"} stroke="#3350a0" />
      </svg>
    </button>
  );
}

function Tree({ nodes, tall, depth = 0, selected }: { nodes: TreeNode[]; tall?: boolean; depth?: number; selected?: string }) {
  return (
    <ul className={depth > 0 ? "pl-[19px]" : ""}>
      {nodes.map((node, i) => {
        const last = i === nodes.length - 1 && !node.more;
        const isSelected = selected !== undefined && depth === 2 && node.label === selected;
        return (
          <li
            key={i}
            className={clsx(
              "relative before:absolute before:left-[5px] before:border-l before:border-dotted before:border-[#808080]",
              depth === 0 && i === 0 && !tall ? "before:top-2" : "before:top-0",
              last ? (tall ? "before:h-[11px]" : "before:h-[9px]") : "before:bottom-0",
            )}
          >
            <div className={clsx("flex items-center whitespace-nowrap", tall ? "h-[22px]" : "h-[18px]")}>
              {node.state ? (
                <>
                  <Expander state={node.state} />
                  <span className="w-1 shrink-0 border-t border-dotted border-[#808080]" />
                </>
              ) : (
                <span className="ml-[5px] w-2.5 shrink-0 border-t border-dotted border-[#808080]" />
              )}
              {node.icon && <Icon name={node.icon} className="mr-0.5 ml-0.5 size-4" />}
              <span
                className={clsx(
                  "px-0.5",
                  node.bold && "font-bold",
                  isSelected && "bg-[#3399ff] text-white outline outline-dotted outline-[#cc6600] -outline-offset-1",
                )}
              >
                {node.label}
              </span>
            </div>
            {node.children && <Tree nodes={node.children} tall={tall} depth={depth + 1} selected={selected} />}
          </li>
        );
      })}
    </ul>
  );
}

// ---------- Navigator ----------

function Chevron({ dir }: { dir: "left" | "right" | "up" | "down" }) {
  const d = { left: "M7 1L2 6l5 5", right: "M3 1l5 5l-5 5", up: "M1 7l5-5l5 5", down: "M1 3l5 5l5-5" }[dir];
  return (
    <svg viewBox="0 0 12 12" className="size-3" fill="none" aria-hidden="true">
      <path d={d} stroke="#505050" strokeWidth="2" />
    </svg>
  );
}

function PinClose() {
  return (
    <svg viewBox="0 0 30 12" className="h-3 w-[30px]" fill="none" aria-hidden="true">
      <path d="M3 1h6M4 1v6M8 1v6M1 7h9M5.500 7v4M7 1v6" stroke="#747a84" />
      <path d="M19 1l9 9M28 1l-9 9" stroke="#747a84" strokeWidth="1.500" />
    </svg>
  );
}

function Navigator() {
  return (
    <aside className="flex w-[314px] shrink-0 flex-col font-['Open_Sans',sans-serif]">
      <div className="flex h-[28px] shrink-0 items-center justify-between border-t border-white bg-[#b9c0ca] pr-1 pl-1 text-sm text-[#4c4f55]">
        Project Navigator - Data
        <PinClose />
      </div>
      <div className="mx-0.5 mt-[3px] flex min-h-0 flex-1 flex-col border border-[#8a8d94] bg-[#f0f0f0]">
        <div className="flex min-h-0 flex-1">
          <div className="mt-px h-full flex-1 overflow-hidden bg-[#fcfbf3] pl-[7px] text-sm text-black">
            <Tree nodes={navigatorTree} tall />
          </div>
          <div className="flex w-[21px] flex-col items-center justify-end pb-1">
            <Chevron dir="down" />
          </div>
        </div>
        <div className="flex h-[22px] shrink-0 items-center pr-7 pl-1.5">
          <button type="button" aria-label="Scroll left">
            <Chevron dir="left" />
          </button>
          <span className="ml-1 h-[19px] w-[89px] bg-[#cdcdcd]" />
          <span className="flex-1" />
          <button type="button" aria-label="Scroll right">
            <Chevron dir="right" />
          </button>
        </div>
      </div>
      <div className="flex h-8 shrink-0 items-start gap-2.5 pt-px pl-1.5 text-[13px] text-[#5a5f6b]">
        <button type="button" className="flex h-[26px] items-center gap-1 rounded-b border border-t-0 border-[#b4ecf0] bg-[#eceff6] pt-0.5 pr-1">
          <Icon name="tabData" className="size-4" />
          Data
        </button>
        <button type="button" className="flex h-[26px] items-center gap-0.5 pt-0.5">
          <Icon name="tabDisplay" className="size-4" />
          Display
        </button>
        <button type="button" className="flex h-[26px] items-center gap-0.5 pt-0.5">
          <Icon name="tabViews" className="size-4" />
          Views
        </button>
      </div>
    </aside>
  );
}

// ---------- 3D model ----------

const backBeams = [
  "M60 67L735 350",
  "M60 178L625 413",
  "M262 160V460",
  "M498 260V460",
  "M262 160L60 258",
  "M262 270L60 372",
  "M60 268L525 465",
  "M60 285L510 478",
  "M60 380L285 475L400 525",
  "M498 258L60 482",
  "M498 370L60 592",
  "M287 365V570",
  "M60 472L313 573",
  "M60 488L290 586",
  "M60 582L200 635",
  "M525 467L100 685",
  "M88 700V1000",
];

const frontBeams = [
  "M125 1110L335 1003",
  "M125 1003L335 890",
  "M125 890L335 788",
  "M125 890V1225",
  "M60 1085L361 1213L573 1102",
  "M60 975L361 1104L573 992",
  "M60 865L361 992L573 883",
  "M361 990V1322",
];

function Beams({ paths }: { paths: string[] }) {
  return (
    <g fill="none">
      {paths.map((d) => (
        <g key={d}>
          <path d={d} stroke="#3c3cae" strokeWidth="15" />
          <path d={d} stroke="#6868fa" strokeWidth="10" />
        </g>
      ))}
    </g>
  );
}

const rightWindows = [[1089, 669], [1089, 778], [1089, 887], [893, 771], [893, 880], [893, 990], [685, 880], [685, 990], [685, 1098]];
const leftWindows = [[222, 791], [222, 900], [222, 1008], [450, 886], [450, 997], [450, 1106]];
const hingePoints = [
  [250, 163], [250, 272], [486, 262], [486, 371], [274, 363], [299, 363], [274, 372], [299, 372], [510, 460], [486, 481], [88, 470], [88, 481],
  [274, 470], [299, 470], [274, 481], [299, 481], [299, 570], [274, 581], [88, 580], [88, 591], [88, 682], [88, 692], [88, 790], [88, 800],
  [88, 902], [88, 912], [88, 1008], [88, 1019], [113, 1019], [510, 569], [325, 790], [325, 899], [325, 1009], [138, 888], [138, 997], [138, 1107],
  [138, 1217], [325, 1108], [325, 1118], [349, 1118], [560, 1206], [770, 1096], [981, 985],
];
const redNodes = [
  [734, 351], [525, 467], [313, 575], [104, 688], [547, 671], [1206, 552], [1207, 662], [1207, 771], [1207, 882], [1207, 1026],
  [573, 885], [573, 992], [573, 1102], [573, 1212], [361, 993], [361, 1104], [361, 1213], [361, 1322], [361, 1467], [785, 1101], [996, 990], [525, 576],
];

function Window({ x, y, side }: { x: number; y: number; side: "l" | "r" }) {
  const pts = side === "r"
    ? [[x - 15, y - 16], [x + 15, y - 30], [x + 15, y + 15], [x - 15, y + 29]]
    : [[x - 16, y - 28], [x + 16, y - 15], [x + 16, y + 29], [x - 16, y + 16]];
  return (
    <g>
      <polygon points={pts.join(" ")} fill="#808080" stroke="#f0f0f0" strokeWidth="3" />
      <polygon points={pts.join(" ")} fill="none" stroke="#ee20cc" strokeWidth="3" strokeDasharray="14 4" />
      {pts.map(([px, py], i) => (
        <rect key={i} x={px - 3} y={py - 3} width="6" height="6" fill="#f01040" />
      ))}
    </g>
  );
}

const gridDots: number[][] = [];
for (let i = -30; i < 50; i++) {
  for (let j = -30; j < 50; j++) {
    const x = 109 + i * 63 + j * 32;
    const y = 40 + i * 5 + j * 29;
    const inside = y > (x - 200) * 0.418 + 8 && y < 1880 - x * 0.508;
    if (inside && x > 70 && x < 1368 && y > -15 && y < 1550) gridDots.push([x, y, (i + j) % 3]);
  }
}

const supports: number[][] = [];
for (let i = 0; i < 14; i++) supports.push([391 + i * 60.3, 1464 - i * 31.6]);
for (let i = 0; i < 5; i++) supports.push([329 - i * 64, 1467 - i * 27]);

function ModelView() {
  return (
    <svg viewBox="0 -18 1371 1686" className="h-full max-h-[562px] w-[457px]" role="img" aria-label="Office building model">
      <g transform="scale(1 1.0714)">
        <polygon points="70,-17 160,-17 1371,490 1371,1190 660,1557 70,1557" fill="#fcfcfc" />
        <path d="M160-17L1371 490M415 93L300 150M750 233L620 300M1371 490L1190 580M1371 1055L1210 990M1371 700L1210 770M1371 1190L640 1557M640 1320L900 1425M420 1490L530 1557M1371 865L1210 800" stroke="#e6e6e6" strokeWidth="3" fill="none" />
        {gridDots.map(([x, y, k], i) => (
          <rect key={i} x={x} y={y} width="3" height="3" fill={k === 0 ? "#a8dca8" : "#c8c8c8"} />
        ))}
        <path d="M953 444L1089 373M945 1164L1196 1269" stroke="#108080" strokeWidth="3.500" />
        <polygon points="70,408 380,528 180,632 70,590" fill="#828282" />
        <path d="M70 412L370 530" stroke="#fff" strokeWidth="6" strokeDasharray="30 6" />
        <path d="M70 556L260 470" stroke="#666" strokeWidth="16" />
        <polygon points="70,600 180,640 70,690" fill="#a0a0a0" />
        <polygon points="70,690 104,700 104,1020 70,1010" fill="#8c8c8c" />
        <Beams paths={backBeams} />
        {/* courtyard */}
        <polygon points="313,575 525,467 755,563 547,670" fill="#bebebe" />
        <path d="M525 467V660M430 622L525 577L645 624M313 575L525 467L755 563" stroke="#f8f8f8" strokeWidth="4" fill="none" />
        <polygon points="597,527 685,562 685,603 640,623 597,607" fill="#808080" stroke="#f0f0f0" strokeWidth="3" />
        <path d="M685 601V562L597 527V607L640 623" fill="none" stroke="#ee20cc" strokeWidth="4" strokeDasharray="14 6" />
        <path d="M593 523h9v9h-9zM681 558h9v9h-9zM593 602h9v9h-9z" fill="#f01040" />
        <path d="M597 630v18" stroke="#ee20cc" strokeWidth="6" />
        {/* walls */}
        <polygon points="100,688 573,883 573,1212 100,1012" fill="#b9b9b9" />
        <polygon points="573,883 1206,552 1206,1027 361,1467 361,1322 573,1212" fill="#b3b3b3" />
        <polygon points="70,1010 100,1020 325,1105 573,1212 361,1322 70,1202" fill="#828282" />
        <path d="M130 1217L325 1112" stroke="#a4a4a4" strokeWidth="20" />
        <path d="M325 1108L573 1206" stroke="#6c6c6c" strokeWidth="12" />
        <polygon points="70,1202 361,1322 361,1467 70,1347" fill="#b1b1b1" />
        <path d="M100 688V1010M100 797L573 992M100 905L573 1102M573 883V1212M573 992L1206 662M573 1102L1206 771M70 1202L361 1322L1206 881M361 1322V1467M1206 552V1027" stroke="#f8f8f8" strokeWidth="4" fill="none" />
        <polygon points="734,353 1206,552 573,883 100,688 313,575 547,670 755,563 525,467" fill="#aaaa00" />
        <path d="M70 1347L361 1467L1206 1027" stroke="#20e020" strokeWidth="4" fill="none" />
        {supports.map(([x, y], i) => (
          <path key={i} d={`M${x - 15} ${y}l10-4V${y - 12}h10V${y - 4}l10 4l-10 5l-5 8l-5-8z`} fill="#20e020" />
        ))}
        {rightWindows.map(([x, y]) => <Window key={`${x}-${y}`} x={x} y={y} side="r" />)}
        {leftWindows.map(([x, y]) => <Window key={`${x}-${y}`} x={x} y={y} side="l" />)}
        <Beams paths={frontBeams} />
        {redNodes.map(([x, y], i) => (
          <rect key={i} x={x - 4} y={y - 4} width="9" height="9" fill="#e81010" />
        ))}
        {hingePoints.map(([x, y], i) => (
          <circle key={i} cx={x} cy={y} r="7.500" fill="#fff" stroke="#b8d4f4" strokeWidth="2" />
        ))}
        <rect x="676" y="745" width="13" height="13" fill="#f8f800" />
        <path d="M186 848L250 873" stroke="#e01010" strokeWidth="5" />
        <path d="M250 866L278 884L246 884z" fill="#c01010" />
        <path d="M186 848L125 878" stroke="#10e010" strokeWidth="5" />
        <path d="M103 889L124 870L132 884z" fill="#10b010" />
        <path d="M186 848V925" stroke="#10e8f0" strokeWidth="5" />
        <path d="M178 922h16l-8 24z" fill="#10a0a8" />
      </g>
      <g fontFamily="Liberation Sans, sans-serif" fontSize="27" textAnchor="middle">
        <text x="299" y="967" fill="#e81010">X</text>
        <text x="88" y="974" fill="#10e010">Y</text>
        <text x="188" y="1046" fill="#10e8f0">Z</text>
      </g>
    </svg>
  );
}

// ---------- Table panel ----------

const sheetTabs = ["Nodes", "Lines", "Materials", "Surfaces", "Solids", "Openings", "Nodal Supports", "Line Supports", "Surface Supports", "Line Hinges", "Cross-Sections", "Member Hinges", "Member Eccentricities", "Member Divisions", "Members"];

const rows: string[][] = [
  ...Array.from({ length: 6 }, () => ["", "", "", "", "", "", "", ""]),
  ["7", "Standard", "0", "Cartesian", "3.904", "7.157", "4.000", ""],
];

function TablePanel() {
  return (
    <section className="flex shrink-0 flex-col bg-[#f0f0f0]">
      <div className="flex h-7 items-center justify-end bg-[#b9c0ca] pr-1">
        <PinClose />
      </div>
      <div className="h-[31px] border-b border-[#5a5c60] bg-linear-to-b from-[#e9edf7] to-[#cfd3dd]" />
      <div className="flex border-l border-[#5a5c60] pt-[3px] pl-0.5">
        <table className="min-w-0 flex-1 table-fixed border-collapse text-[13px] leading-4 text-black">
          <colgroup>
            <col className="w-[53px]" />
            <col className="w-[100px]" />
            <col className="w-[86px]" />
            <col className="w-[108px]" />
            <col className="w-[93px]" />
            <col className="w-[93px]" />
            <col className="w-[93px]" />
            <col />
          </colgroup>
          <thead>
            <tr className="h-[18px] bg-[#e1e1e1]">
              {["", "", "", "", "", "", "", "G"].map((c, i) => (
                <th key={i} className="h-[18px] border border-[#5f5f5f] p-0 text-center font-normal">
                  {c}
                </th>
              ))}
            </tr>
            <tr>
              {["", "", "", "", "", "", "", "Comment"].map((c, i) => (
                <th key={i} className="h-[38px] border border-[#a0a0a0] p-0 pb-0.5 text-center align-bottom font-normal">
                  {c}
                </th>
              ))}
            </tr>
          </thead>
          <tbody>
            {rows.map((row, r) => (
              <tr key={r} className="bg-white">
                {row.map((cell, c) => (
                  <td
                    key={c}
                    className={clsx(
                      "h-[19px] border border-[#a0a0a0] py-0",
                      c === 0 && "border-[#5f5f5f] bg-[#e1e1e1] text-center",
                      c === 2 && "text-center",
                      (c === 1 || c === 3) && "px-1",
                      c > 3 && "px-1 text-right",
                    )}
                  >
                    {c === 3 && cell ? (
                      <>
                        <u>{cell[0]}</u>
                        {cell.slice(1)}
                      </>
                    ) : (
                      cell
                    )}
                  </td>
                ))}
              </tr>
            ))}
          </tbody>
        </table>
        <div className="mr-0.5 flex w-[21px] flex-col items-center justify-between border-r border-[#a0a0a0] pt-1 pb-1">
          <div className="flex w-full flex-col items-center gap-1">
            <Chevron dir="up" />
            <span className="h-[21px] w-[19px] bg-[#cdcdcd]" />
          </div>
          <Chevron dir="down" />
        </div>
      </div>
      <div className="mt-1.5 flex h-5 shrink-0 items-start text-[13px] leading-4 text-black">
        {sheetTabs.map((tab, i) => (
          <button
            key={tab}
            type="button"
            className={clsx(
              "h-[19px] rounded-b border-r border-b border-[#5f5f5f] pr-1.5 whitespace-nowrap",
              i === 0 ? "border-l bg-[#f0f0f0] pl-1" : "border-t bg-[#e1e1e1] pl-1.5",
            )}
          >
            {tab}
          </button>
        ))}
        <span className="flex-1" />
        {["M4 4v8M12 4v8L7 8z", "M10 4v8L5 8z", "M6 4v8l5-4z", "M4 4v8l5-4zM12 4v8"].map((d, i) => (
          <button key={i} type="button" aria-label={`Sheet scroll ${i + 1}`} className="flex h-[18px] w-[18px] items-center justify-center border-r border-b border-[#6b6b6b] bg-[#f0f0f0]">
            <svg viewBox="0 0 16 16" className="size-4" aria-hidden="true">
              <path d={d} fill={i < 2 ? "#a0a0a0" : "#000"} stroke={i < 2 ? "#a0a0a0" : "#000"} />
            </svg>
          </button>
        ))}
      </div>
      <div className="h-[22px]" />
    </section>
  );
}

// ---------- Dialog ----------

function Spin({ id, value, onChange }: { id: string; value: number; onChange: (v: number) => void }) {
  return (
    <span className="flex h-6 w-[70px] border border-[#7a7a7a] bg-white">
      <input
        id={id}
        type="text"
        value={value}
        onChange={(e) => onChange(Number(e.target.value) || 0)}
        className="w-0 flex-1 pr-px text-right outline-none"
      />
      <span className="flex w-[21px] flex-col border-l border-[#c0c0c0] bg-[#f0f0f0] p-px">
        {[1, -1].map((step) => (
          <button
            key={step}
            type="button"
            aria-label={step > 0 ? "Increase" : "Decrease"}
            onClick={() => onChange(value + step)}
            className="flex flex-1 items-center justify-center border border-[#acacac]"
          >
            <svg viewBox="0 0 7 4" className="h-1 w-[7px]" aria-hidden="true">
              <path d={step > 0 ? "M0 4h7L3.500 0z" : "M0 0h7L3.500 4z"} />
            </svg>
          </button>
        ))}
      </span>
    </span>
  );
}

function SelectBox({ id, value, className }: { id: string; value: string; className: string }) {
  return (
    <span className={clsx("relative flex h-6", className)}>
      <select id={id} className="w-full appearance-none border border-[#acacac] bg-[#e1e1e1] px-[3px] leading-5">
        <option>{value}</option>
      </select>
      <ThinChevron className="pointer-events-none absolute top-2 right-[5px]" />
    </span>
  );
}

function ThinChevron({ className }: { className?: string }) {
  return (
    <svg viewBox="0 0 10 7" className={clsx("h-[7px] w-2.5", className)} fill="none" aria-hidden="true">
      <path d="M.5 1L5 5.500L9.500 1" stroke="#444" strokeWidth="1.100" />
    </svg>
  );
}

function GroupHeader({ children }: { children: ReactNode }) {
  return (
    <h2 className="h-[18px] shrink-0 bg-[#dce6f4] px-[3px] text-sm leading-[18px] text-[#1f4a78] [clip-path:polygon(0_0,calc(100%-12px)_0,100%_12px,100%_100%,0_100%)]">
      {children}
    </h2>
  );
}

function ToolButton({ name, label, disabled }: { name: string; label: string; disabled?: boolean }) {
  return (
    <button
      type="button"
      aria-label={label}
      disabled={disabled}
      className={clsx("flex h-[26px] w-[34px] items-center justify-center border", disabled ? "border-[#bfbfbf] bg-[#cccccc]" : "border-[#acacac] bg-[#e1e1e1]")}
    >
      <Icon name={name} />
    </button>
  );
}

function Preview() {
  return (
    <div className="h-[328px] w-[290px] shrink-0 border-t border-l border-[#a0a0a0] bg-white">
      <svg viewBox="0 0 289 327" className="h-full w-full" role="img" aria-label="Surface preview">
        <path d="M24 169L90 140M95 139L153 148M24 169L142 187M144 186L194 163" stroke="#a0a0a0" strokeWidth="1.200" strokeDasharray="9 4" fill="none" />
        <path d="M12 168h4v4h-4zM87 134h4v4h-4zM142 187h4v4h-4zM220 155h1v3h-1z" fill="#f00000" />
        <g fill="#00e800" fontFamily="Liberation Sans, sans-serif">
          <text x="117" y="160" fontSize="10" fontWeight="bold" xmlSpace="preserve">d =  50.0 ...  50.0 mm</text>
          <text x="117" y="173" fontSize="9">S1</text>
        </g>
      </svg>
    </div>
  );
}

function DisplayProperties() {
  const [align, setAlign] = useState(8);
  const [thickness, setThickness] = useState(1);
  const [spacing, setSpacing] = useState(5);
  const [both, setBoth] = useState(false);

  return (
    <div
      role="dialog"
      aria-labelledby="dialog-title"
      className="absolute top-[142px] right-[432px] bottom-[91px] left-[193px] flex flex-col border border-[#1883d7] bg-[#f0f0f0] font-['Liberation_Sans',Arial,sans-serif] text-[13px] leading-4 text-black"
    >
      <div className="flex h-[37px] shrink-0 items-center justify-between bg-[#0078d7] pr-3 pl-2.5 font-['Open_Sans',sans-serif] text-sm text-white">
        <span id="dialog-title">Display Properties - Standard with black background</span>
        <button type="button" aria-label="Close">
          <svg viewBox="0 0 18 18" className="size-[18px]" aria-hidden="true">
            <path d="M3 3l12 12M15 3L3 15" stroke="#fff" strokeWidth="1.200" />
          </svg>
        </button>
      </div>

      <div className="flex min-h-0 flex-1 gap-2.5 px-2.5 pt-2.5">
        <section className="flex w-[460px] shrink-0 flex-col">
          <GroupHeader>Category</GroupHeader>
          <div className="mt-0.5 flex-1 overflow-hidden border border-t-[#a0a0a0] border-r-[#a8a8ee] border-b-[#a8a8ee] border-l-[#a0a0a0] bg-white pt-px pl-[7px]">
            <Tree nodes={categoryTree} selected="Surfaces" />
          </div>
        </section>

        <section className="flex min-w-0 flex-1 flex-col">
          <div className="flex items-end pt-px" role="tablist">
            <button type="button" role="tab" aria-selected="true" className="relative -mb-px h-[23px] border border-b-0 border-[#dcdcdc] bg-white pr-2 pb-1 pl-[7px]">
              Screen
            </button>
            <button type="button" role="tab" aria-selected="false" className="h-[21px] border border-b-0 border-l-0 border-[#dcdcdc] px-1">
              Printout Report
            </button>
          </div>
          <div className="flex flex-1 flex-col border border-[#dcdcdc] bg-white px-[7px] pt-3 pb-[5px]">
            <GroupHeader>Model Data - Surfaces - Surfaces</GroupHeader>
            <div className="mt-px flex flex-1 flex-col border-r border-b border-[#a8a8ee] bg-[#f1f4fa] pt-[5px] pr-[5px] pb-[5px] pl-1">
              <div className="flex justify-between">
                <div className="w-[312px] pt-[9px]">
                  <label htmlFor="cat" className="block">
                    Category:
                  </label>
                  <SelectBox id="cat" value="Surface" className="mt-1.5 w-[292px]" />
                  <div className="mt-[19px] flex h-7 items-center">
                    <label htmlFor="line-color" className="w-[140px]">
                      Line <u>c</u>olor:
                    </label>
                    <button id="line-color" type="button" className="flex h-7 w-[70px] items-center justify-between border border-[#7a7a7a] bg-white px-[5px]">
                      <span className="h-4 w-[38px] border border-black bg-[#a0a0a4]" />
                      <ThinChevron />
                    </button>
                  </div>
                  <div className="mt-[7px] flex items-center">
                    <label htmlFor="line-type" className="w-[140px]">
                      Line <u>t</u>ype:
                    </label>
                    <SelectBox id="line-type" value="Dashed" className="w-[172px]" />
                  </div>
                  <div className="mt-3.5 flex items-center">
                    <label htmlFor="thickness" className="w-[140px]">
                      Line t<u>h</u>ickness:
                    </label>
                    <Spin id="thickness" value={thickness} onChange={setThickness} />
                  </div>
                  <div className="mt-2.5 flex items-center">
                    <label htmlFor="spacing" className="w-[140px]">
                      <u>S</u>pacing:
                    </label>
                    <Spin id="spacing" value={spacing} onChange={setSpacing} />
                    <span className="ml-1.5">[%]</span>
                  </div>
                  <hr className="mt-[11px] w-[309px] border-[#a0a0a0]" />
                  <p className="mt-2.5">Numbering</p>
                  <fieldset className="mt-[9px] flex">
                    <legend className="float-left w-[140px]">
                      <u>A</u>lignment:
                    </legend>
                    <div className="grid grid-cols-3 gap-2">
                      {Array.from({ length: 9 }, (_, i) => (
                        <input
                          key={i}
                          type="radio"
                          name="alignment"
                          aria-label={`Alignment ${i + 1}`}
                          checked={align === i}
                          onChange={() => setAlign(i)}
                          className="size-4 appearance-none rounded-full border border-[#333] bg-white checked:bg-[#333] checked:shadow-[inset_0_0_0_2px_white]"
                        />
                      ))}
                    </div>
                  </fieldset>
                </div>
                <Preview />
              </div>
              <div className="mt-auto flex justify-end gap-1.5">
                <ToolButton name="axes" label="Axis systems" />
                <ToolButton name="font" label="Font" />
                <ToolButton name="defaults" label="Default" />
              </div>
            </div>
          </div>

          <div className="mt-[13px] flex h-14 shrink-0 gap-2.5">
            <div className="flex w-[420px] flex-col">
              <GroupHeader>Identical Settings</GroupHeader>
              <div className="mt-px flex flex-1 items-center border-r border-b border-[#a8a8ee] bg-[#f1f4fa] pt-px pl-1">
                <input
                  id="both"
                  type="checkbox"
                  checked={both}
                  onChange={() => setBoth(!both)}
                  className="size-4 appearance-none border border-[#333] bg-white checked:bg-[#333]"
                />
                <label htmlFor="both" className="ml-[3px]">
                  <u>F</u>or screen and printout report
                </label>
              </div>
            </div>
            <div className="flex-1 border border-t-[#dce6f4] border-r-[#a8a8ee] border-b-[#a8a8ee] border-l-[#dce6f4] bg-[#f1f4fa]" />
          </div>
        </section>
      </div>

      <footer className="mx-2.5 mt-2.5 flex h-[52px] shrink-0 items-start justify-between border-t border-[#a0a0a0] px-px pt-3.5">
        <div className="flex gap-3">
          <ToolButton name="help" label="Help" />
          <ToolButton name="edit" label="Edit" disabled />
          <ToolButton name="units" label="Units and decimal places" />
          <ToolButton name="defaults" label="Default" />
        </div>
        <div className="flex gap-3">
          <button type="button" className="h-[26px] w-[98px] border-2 border-[#0078d7] bg-[#e1e1e1]">
            OK
          </button>
          <button type="button" className="h-[26px] w-[98px] border border-[#acacac] bg-[#e1e1e1]">
            Cancel
          </button>
        </div>
      </footer>
      <svg viewBox="0 0 14 14" className="absolute right-0 bottom-0 size-3.5" aria-hidden="true">
        <path d="M0 14L14 0M5 14l9-9M10 14l4-4" stroke="#8c8c8c" strokeWidth="1.800" />
      </svg>
    </div>
  );
}

// ---------- App shell ----------

const menu: [string, string, string][] = [
  ["", "F", "ile"],
  ["", "E", "dit"],
  ["", "V", "iew"],
  ["", "I", "nsert"],
  ["", "C", "alculate"],
  ["", "R", "esults"],
  ["", "T", "ools"],
  ["Ta", "b", "le"],
  ["", "O", "ptions"],
  ["", "A", "dd-on Modules"],
  ["", "W", "indow"],
  ["", "H", "elp"],
];

const statusItems = [
  ["SNAP", "w-[43px]"],
  ["GRID", "w-[41px]"],
  ["CARTES", "w-[65px] text-right"],
  ["OSNAP", "w-[53px]"],
  ["GLINES", "w-[53px]"],
  ["DXF", "w-[34px]"],
];

export default function App() {
  return (
    <div className="relative flex h-screen flex-col overflow-hidden border border-[#333] bg-[#cfd3dd] font-['Liberation_Sans',Arial,sans-serif]">
      <header className="flex h-[37px] shrink-0 items-center bg-white pr-[22px] pl-2 font-['Open_Sans',sans-serif] text-sm text-[#999]">
        <Icon name="app" />
        <h1 className="ml-1.5 flex-1">RFEM 5.07.0000 x64 - [Office building*]</h1>
        <svg viewBox="0 0 132 14" className="h-3.5 w-[132px]" fill="none" stroke="#888" aria-hidden="true">
          <path d="M1 7.500h12M60.500 1.500h11v11h-11zM119 1l12 12M131 1l-12 12" />
        </svg>
      </header>

      <nav className="flex h-[30px] shrink-0 items-center pt-px pr-2 font-['Open_Sans',sans-serif] text-[13px] text-[#484c58]">
        <Grip />
        <Icon name="bridge" />
        <div className="ml-3 flex flex-1 gap-[15px]">
          {menu.map(([pre, key, rest]) => (
            <button key={key + rest} type="button">
              {pre}
              <u>{key}</u>
              {rest}
            </button>
          ))}
        </div>
        <svg viewBox="0 0 52 10" className="mt-2 h-2.5 w-[52px]" fill="none" stroke="#666" aria-hidden="true">
          <path d="M1 8h7" strokeWidth="2" />
          <path d="M21.500 3.500h6v5h-6zM23.500 3V1.500h6v5H28" />
          <path d="M43 1l7 8M50 1l-7 8" strokeWidth="1.600" />
        </svg>
      </nav>

      <ToolbarRow groups={rowOne} />
      <ToolbarRow groups={rowTwo} />

      <main className="flex min-h-0 flex-1 border-t border-[#9ea2ac]">
        <Navigator />
        <div className="ml-1 flex min-w-0 flex-1 flex-col pr-px">
          <div className="flex min-h-0 flex-1 justify-end overflow-hidden border-t border-l border-[#5a5c60] bg-white">
            <ModelView />
          </div>
          <div className="h-1.5 shrink-0" />
          <TablePanel />
        </div>
      </main>

      <footer className="flex h-[26px] shrink-0 border-t border-[#a8a8b4] bg-linear-to-b from-[#e4e6ee] via-[#a8afb8] to-[#b8bcc6] pt-px text-[13px] leading-[18px] text-[#282c34]">
        <div className="flex flex-1 justify-end gap-px">
          {statusItems.map(([label, width]) => (
            <span key={label} className={clsx("border border-t-black border-r-white border-b-white border-l-black px-px", width)}>
              {label}
            </span>
          ))}
        </div>
        <div className="flex w-[485px] justify-end">
          <span className="w-[88px] border-l border-[#8c9098]" />
          <span className="w-[74px] border-l border-[#8c9098]" />
          <span className="w-[74px] border-l border-[#8c9098]" />
          <span className="flex w-[95px] items-end justify-end border-l border-[#8c9098]">
            <svg viewBox="0 0 12 12" className="size-3" aria-hidden="true">
              <path d="M8 0h3v3H8zM4 4h3v3H4zM8 4h3v3H8zM0 8h3v3H0zM4 8h3v3H4zM8 8h3v3H8z" fill="#70747c" />
            </svg>
          </span>
        </div>
      </footer>

      <DisplayProperties />
    </div>
  );
}
